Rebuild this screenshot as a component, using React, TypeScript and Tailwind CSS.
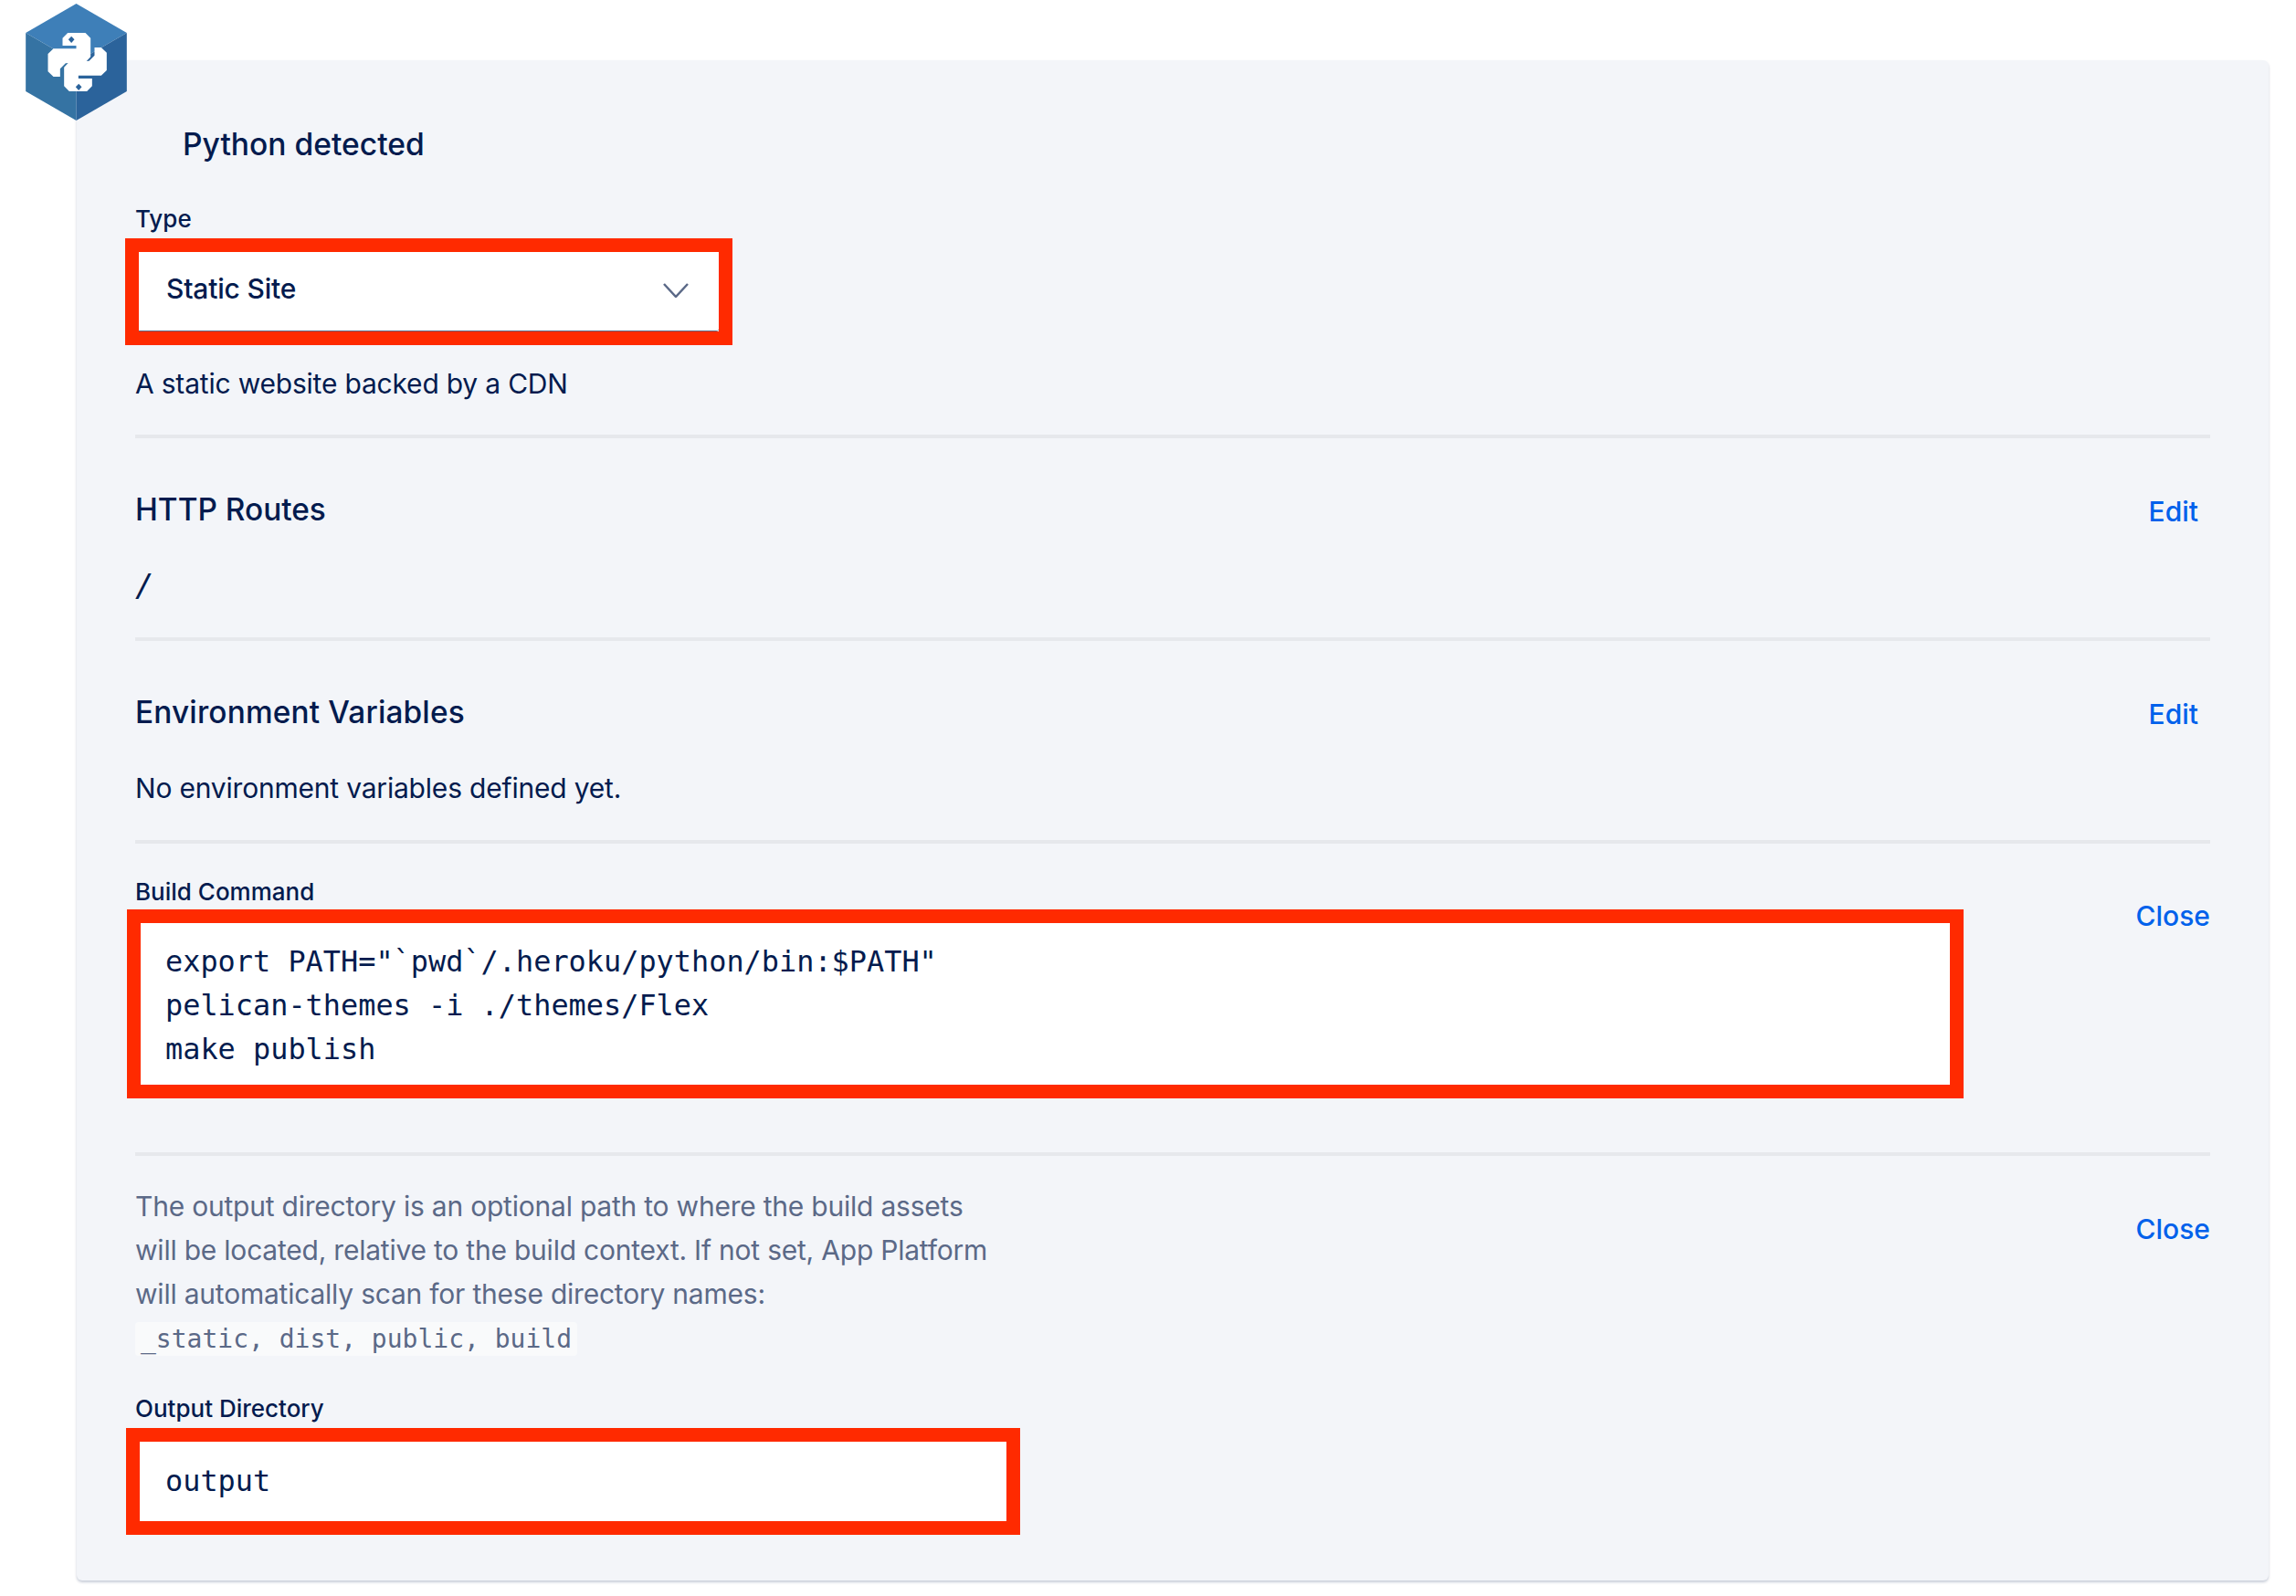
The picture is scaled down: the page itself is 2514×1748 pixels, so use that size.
import React from 'react';

const sans = 'font-["Inter",sans-serif]';

function Divider({ className = '' }: { className?: string }) {
  return <div className={`h-[4px] bg-[#e6e8ec] ${className}`} />;
}

function PythonHex() {
  const snake =
    'M222 108 L280 108 L297 125 L297 187 L280 205 L215 208 L197 226 L197 252 L175 252 L157 235 L157 177 L175 160 L250 160 L250 150 L205 150 L205 125 Z';
  return (
    <svg viewBox="84 12 332 384" className="absolute left-[28px] top-[4px] h-[128px] w-[111px]">
      <polygon points="250,12 416,108 250,204 84,108" fill="#3e7fb8" />
      <polygon points="84,108 250,204 250,396 84,300" fill="#3573a3" />
      <polygon points="416,108 250,204 250,396 416,300" fill="#2b639b" />
      <path d={snake} fill="#fff" />
      <path d={snake} fill="#fff" transform="rotate(180 253.5 204)" />
      <polygon points="234,119 244,130 234,141 224,130" fill="#2b639b" />
      <polygon points="258,275 268,286 258,297 248,286" fill="#2b639b" />
    </svg>
  );
}

function RowLink({ label, className = '' }: { label: string; className?: string }) {
  return <span className={`text-[30px] leading-[40px] font-medium text-[#0061eb] ${className}`}>{label}</span>;
}

export default function App() {
  return (
    <div className={`relative h-[1748px] w-[2514px] bg-white pl-[84px] pt-[66px] ${sans}`}>
      <PythonHex />
      <div className="h-[1665px] w-[2400px] rounded-[6px] bg-[#f3f5f9] px-[64px] pt-[68px] text-[#031b4e] shadow-[0_2px_3px_rgba(3,27,78,0.22)]">
        <h2 className="ml-[52px] text-[33.6px] leading-[48px] font-medium">Python detected</h2>

        <div className="mt-[44px] text-[26px] leading-[28px] font-medium">Type</div>
        <div className="mt-[7px] -ml-[11px] h-[117px] w-[665px] border-[15px] border-[#ff2a00] bg-white">
          <div className="flex h-full items-center justify-between rounded-br-[3px] border-b border-[#5b6987] pl-[30px] pr-[33px]">
            <span className="mb-[6px] text-[30px] font-medium tracking-[-0.2px]">Static Site</span>
            <svg viewBox="0 0 28 16" className="mb-[2px] h-[16px] w-[28px]" fill="none" stroke="#5b6987" strokeWidth="2.5">
              <path d="M1 1 L14 15 L27 1" />
            </svg>
          </div>
        </div>
        <p className="mt-[22px] text-[30px] leading-[40px] tracking-[-0.2px]">A static website backed by a CDN</p>
        <Divider className="mt-[36px]" />

        <div className="mt-[58px] flex h-[40px] items-center justify-between pr-[13px]">
          <h3 className="text-[33.4px] leading-[40px] font-medium">HTTP Routes</h3>
          <RowLink label="Edit" className="mt-[4px]" />
        </div>
        <p className="mt-[43px] font-['DejaVu_Sans_Mono',monospace] text-[34px] leading-[40px] italic">/</p>
        <Divider className="mt-[37px]" />

        <div className="mt-[58px] flex h-[40px] items-center justify-between pr-[13px]">
          <h3 className="text-[33.4px] leading-[40px] font-medium tracking-[0.15px]">Environment Variables</h3>
          <RowLink label="Edit" className="mt-[4px]" />
        </div>
        <p className="mt-[43px] text-[30px] leading-[40px] tracking-[-0.2px]">No environment variables defined yet.</p>
        <Divider className="mt-[37px]" />

        <div className="mt-[39px] flex items-start justify-between">
          <div>
            <div className="text-[26px] leading-[28px] font-medium">Build Command</div>
            <div className="mt-[5px] -ml-[9px] h-[207px] w-[2011px] border-[15px] border-[#ff2a00] bg-white pl-[27px] pt-[18px] font-['DejaVu_Sans_Mono',monospace] text-[31.9px] leading-[48px]">
              <div>export PATH="`pwd`/.heroku/python/bin:$PATH"</div>
              <div>pelican-themes -i ./themes/Flex</div>
              <div>make publish</div>
            </div>
          </div>
          <div className="pt-[20px]">
            <RowLink label="Close" />
          </div>
        </div>
        <Divider className="mt-[59px]" />

        <div className="mt-[31px] flex items-start justify-between">
          <p className="w-[960px] text-[30px] leading-[48px] tracking-[-0.22px] text-[#5b6987]">
            The output directory is an optional path to where the build assets will be located, relative to the build context. If not set, App Platform will automatically scan for these directory names:
            <br />
            <code className="rounded-[4px] bg-[#f9fafb] px-[6px] py-[2px] font-['DejaVu_Sans_Mono',monospace] text-[28px] tracking-normal">_static, dist, public, build</code>
          </p>
          <div className="pt-[29px]">
            <RowLink label="Close" />
          </div>
        </div>

        <div className="mt-[38px] text-[26px] leading-[28px] font-medium">Output Directory</div>
        <div className="mt-[7px] -ml-[10px] h-[117px] w-[979px] border-[15px] border-[#ff2a00] bg-white pl-[28px] font-['DejaVu_Sans_Mono',monospace] text-[31.9px] leading-[87px]">
          output
        </div>
      </div>
    </div>
  );
}
